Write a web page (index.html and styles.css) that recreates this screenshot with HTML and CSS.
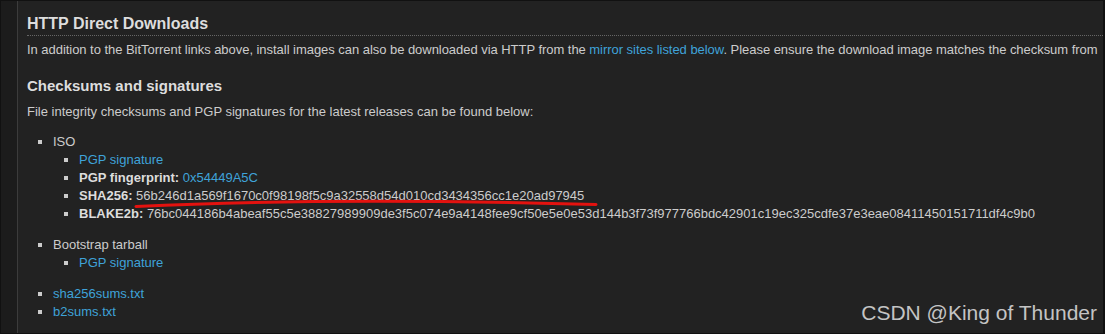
FILE: index.html
```html
<!DOCTYPE html>
<html lang="en">
<head>
    <meta charset="UTF-8">
    <meta name="viewport" content="width=device-width, initial-scale=1.0">
    <title>HTTP Direct Downloads</title>
    <link rel="stylesheet" href="styles.css">
</head>
<body>
    <div class="frame">
        <div class="gutter"></div>
        <div class="content">
            <h2>HTTP Direct Downloads</h2>
            <p class="lead">In addition to the BitTorrent links above, install images can also be downloaded via HTTP from the <a href="#">mirror sites listed below</a>. Please ensure the download image matches the checksum from</p>

            <h3>Checksums and signatures</h3>
            <p class="intro">File integrity checksums and PGP signatures for the latest releases can be found below:</p>

            <ul class="files">
                <li class="group">ISO
                    <ul>
                        <li><a href="#">PGP signature</a></li>
                        <li><strong>PGP fingerprint:</strong> <a href="#">0x54449A5C</a></li>
                        <li><strong>SHA256:</strong> 56b246d1a569f1670c0f98198f5c9a32558d54d010cd3434356cc1e20ad97945</li>
                        <li><strong>BLAKE2b:</strong> 76bc044186b4abeaf55c5e38827989909de3f5c074e9a4148fee9cf50e5e0e53d144b3f73f977766bdc42901c19ec325cdfe37e3eae08411450151711df4c9b0</li>
                    </ul>
                </li>
                <li class="group">Bootstrap tarball
                    <ul>
                        <li><a href="#">PGP signature</a></li>
                    </ul>
                </li>
                <li><a href="#">sha256sums.txt</a></li>
                <li><a href="#">b2sums.txt</a></li>
            </ul>
        </div>

        <!-- hand-drawn marker under the SHA256 hash -->
        <svg class="scribble" width="1105" height="334" viewBox="0 0 1105 334">
            <path d="M136 206.5 Q 330 197 596 204.5" fill="none" stroke="#e3120f" stroke-width="3" stroke-linecap="round"/>
        </svg>

        <div class="watermark">CSDN @King of Thunder</div>
    </div>
</body>
</html>
```

FILE: styles.css
```css
html, body { margin: 0; padding: 0; }
body { background-color: #222; font-family: "Liberation Sans", Arial, sans-serif; color: #ccc; }

.frame {
    position: relative;
    display: flex;
    width: 1105px;
    height: 334px;
    box-sizing: border-box;
    border: 1px solid #111;
    border-right-width: 2px;
    overflow: hidden;
    background-color: #222;
}

.gutter {
    flex: 0 0 16px;
    background-color: #1c1c1c;
    border-right: 1px solid #3c3c3c;
}

.content {
    flex: 1;
    min-width: 0;
    padding: 12px 0 0 9px;
    font-size: 13px;
    line-height: 18px;
    white-space: nowrap;
    overflow: hidden;
}

h2 {
    margin: 0;
    font-size: 16px;
    line-height: 22px;
    color: #ddd;
    border-bottom: 1px dotted #666;
}

h3 {
    margin: 17px 0 0;
    font-size: 15px;
    line-height: 20px;
    color: #ddd;
}

p { margin: 5px 0 0; }
p.lead { letter-spacing: -0.04px; }
p.intro { margin-top: 7px; }

a { color: #3fa3d9; text-decoration: none; }
strong { color: #ddd; }

ul { margin: 0; padding-left: 26px; list-style: square; }
ul.files { margin-top: 12px; }
li.group { margin-bottom: 13px; }
li.group + li:not(.group) { margin-top: 2px; }
li::marker { color: #ccc; }

.scribble {
    position: absolute;
    left: -1px;
    top: -1px;
    pointer-events: none;
}

.watermark {
    position: absolute;
    right: 6px;
    bottom: 8px;
    font-size: 21px;
    color: #c4c4c4;
    font-family: "Liberation Sans", Arial, sans-serif;
}
```
